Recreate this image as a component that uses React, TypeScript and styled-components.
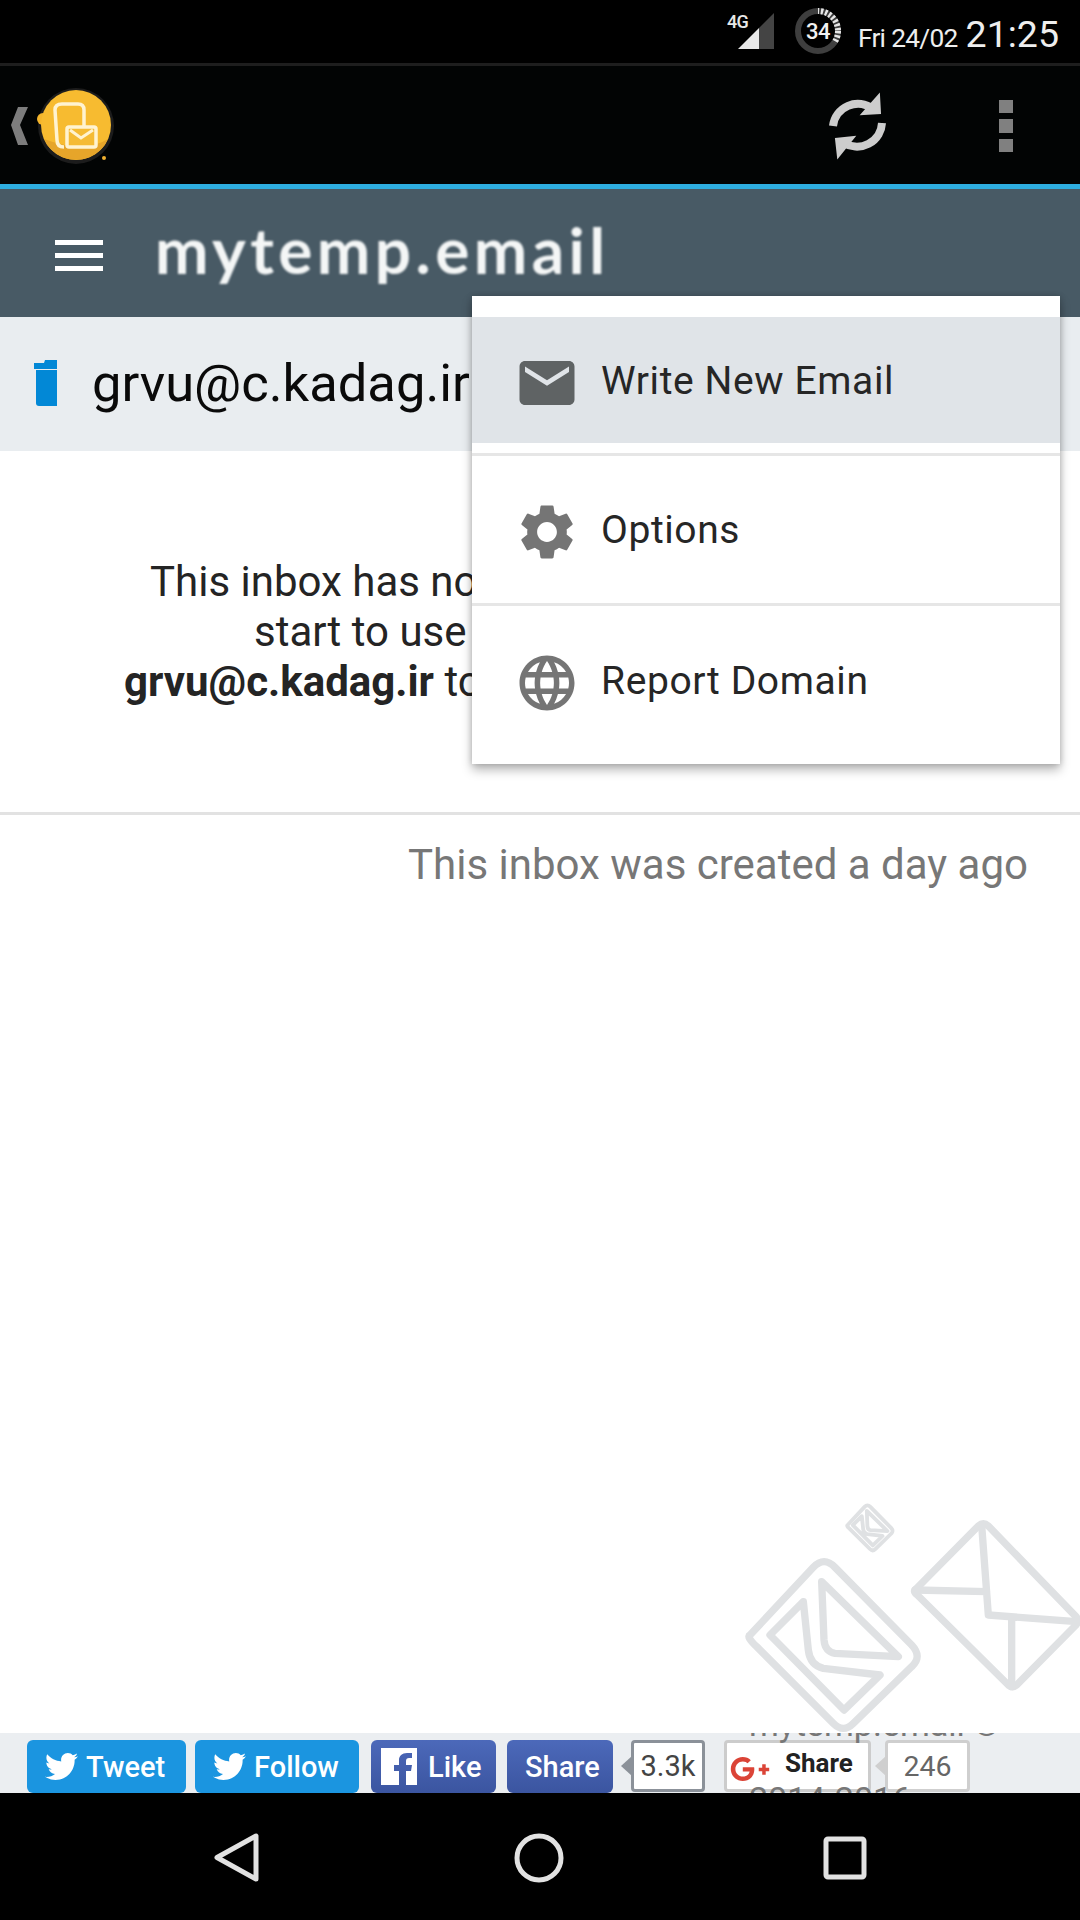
import React from "react";
import styled, { createGlobalStyle } from "styled-components";
import { MdEmail, MdSettings, MdLanguage } from "react-icons/md";
import { FaTwitter, FaGooglePlusG } from "react-icons/fa";

const Global = createGlobalStyle`
  html, body { margin: 0; padding: 0; background: #fff; }
  * { box-sizing: border-box; }
`;

const Screen = styled.div`
  position: relative;
  width: 1080px;
  height: 1920px;
  overflow: hidden;
  display: flex;
  flex-direction: column;
  background: #fff;
  font-family: Roboto, "Liberation Sans", sans-serif;
`;

const StatusBar = styled.div`
  height: 66px;
  flex: none;
  background: #000;
  border-bottom: 3px solid #1e1e1e;
  display: flex;
  align-items: flex-start;
  justify-content: flex-end;
  padding-right: 21px;
  color: #eee;
`;
const NetLabel = styled.span`
  font-size: 18px;
  font-weight: 500;
  letter-spacing: -0.6px;
  line-height: 18px;
  margin-top: 13px;
  margin-right: 3px;
  color: #e8e8e8;
  width: 22px;
`;
const Signal = styled.svg`
  width: 37px;
  height: 38px;
  margin: 12px 20px 0 -14px;
`;
const Battery = styled.div`
  position: relative;
  width: 46px;
  height: 46px;
  margin: 8px 17px 0 0;
  display: flex;
  align-items: center;
  justify-content: center;
  font-size: 22px;
  font-weight: 500;
  letter-spacing: -0.5px;
  color: #f2f2f2;
`;
const BatteryRing = styled.svg`
  position: absolute;
  inset: 0;
`;
const DateText = styled.span`
  font-size: 26.3px;
  letter-spacing: -0.7px;
  line-height: 30px;
  margin-top: 23px;
  margin-right: 8px;
`;
const Clock = styled.span`
  font-size: 37.5px;
  line-height: 42px;
  margin-top: 13px;
`;

const Toolbar = styled.div`
  height: 123px;
  flex: none;
  background: #020404;
  border-bottom: 5px solid #2eaee0;
  display: flex;
  align-items: center;
  padding-left: 11px;
`;
const BackChevron = styled.svg`
  width: 18px;
  height: 38px;
  margin-top: 2px;
`;
const AppLogo = styled.svg`
  width: 84px;
  height: 84px;
  margin-left: 5px;
  margin-top: 1px;
`;
const RefreshIcon = styled.svg`
  width: 62px;
  height: 68px;
  margin-left: auto;
  margin-right: 111px;
  margin-top: 2px;
`;
const DotMenu = styled.div`
  display: flex;
  flex-direction: column;
  gap: 6px;
  margin-right: 67px;
  margin-top: 2px;
`;
const Dot = styled.span`
  width: 14px;
  height: 13.5px;
  background: #808080;
`;

const Header = styled.div`
  height: 128px;
  flex: none;
  background: #485a65;
  display: flex;
  align-items: center;
  padding-left: 55px;
`;
const Burger = styled.div`
  display: flex;
  flex-direction: column;
  gap: 8px;
  margin-top: 5px;
`;
const BurgerBar = styled.span`
  width: 48px;
  height: 5px;
  background: #fff;
`;
const Brand = styled.div`
  margin-left: 52px;
  margin-top: -7px;
  font-family: Lato, sans-serif;
  font-size: 64px;
  font-weight: 700;
  line-height: 64px;
  letter-spacing: 4.4px;
  color: #f4f6f6;
  filter: blur(0.8px);
`;

const AddressBar = styled.div`
  height: 134px;
  flex: none;
  background: #e9edf0;
  display: flex;
  align-items: center;
  padding-left: 34px;
`;
const Bin = styled.svg`
  width: 24px;
  height: 48px;
  margin-top: -2px;
`;
const Address = styled.div`
  margin-left: 34px;
  font-size: 52.5px;
  line-height: 60px;
  margin-top: -2px;
  color: #0a0a0a;
  white-space: nowrap;
`;

const Notice = styled.div`
  flex: none;
  height: 364px;
  padding-top: 106px;
  border-bottom: 3px solid #e2e2e2;
`;
const NoticeLine = styled.div<{ $indent: number }>`
  margin-left: ${(p) => p.$indent}px;
  font-size: 42px;
  line-height: 50px;
  color: #242424;
  white-space: nowrap;
  b { font-weight: 700; }
`;
const Created = styled.div`
  flex: none;
  padding: 24px 52px 0 0;
  text-align: right;
  font-size: 42px;
  line-height: 52px;
  color: #777;
`;
const Spacer = styled.div`
  flex: 1;
`;

const Watermark = styled.svg`
  position: absolute;
  left: 720px;
  top: 1480px;
  width: 360px;
  height: 260px;
  fill: none;
  stroke: #dfe1e3;
  stroke-linejoin: round;
  stroke-linecap: round;
`;

const ShareBar = styled.div`
  position: relative;
  height: 60px;
  flex: none;
  overflow: hidden;
  background: #ebeef1;
  display: flex;
  align-items: flex-start;
  padding: 7px 0 0 27px;
`;
const GhostFooter = styled.div`
  position: absolute;
  z-index: 1;
  left: 749px;
  top: -37px;
  font-size: 34px;
  line-height: 56px;
  color: #777;
  white-space: nowrap;
`;
const GhostYears = styled.div`
  margin-top: 19px;
`;
const SocialButton = styled.div<{ $w: number; $gap: number; $fb?: boolean }>`
  position: relative;
  flex: none;
  width: ${(p) => p.$w}px;
  height: 53px;
  margin-right: ${(p) => p.$gap}px;
  border-radius: 6px;
  background: ${(p) => (p.$fb ? "linear-gradient(#4c69ba, #3b55a0)" : "#1b95e0")};
  color: #fff;
  font-size: 29px;
  font-weight: 500;
  display: flex;
  align-items: center;
  padding-left: 18px;
  gap: 8px;
  line-height: 40px;
`;
const FbMark = styled.svg`
  width: 36px;
  height: 37px;
  margin-left: -8px;
  margin-right: 3px;
`;
const Count = styled.div<{ $w: number; $gap: number; $edge: string; $color: string; $size: number }>`
  position: relative;
  flex: none;
  width: ${(p) => p.$w}px;
  height: 52px;
  margin-right: ${(p) => p.$gap}px;
  border: 3px solid ${(p) => p.$edge};
  border-radius: 4px;
  background: #fff;
  color: ${(p) => p.$color};
  font-size: ${(p) => p.$size}px;
  display: flex;
  align-items: center;
  justify-content: center;
  &::before {
    content: "";
    position: absolute;
    left: -13px;
    top: 13px;
    border-style: solid;
    border-width: 10px 11px 10px 0;
    border-color: transparent ${(p) => p.$edge} transparent transparent;
  }
`;
const PlusButton = styled.div`
  position: relative;
  flex: none;
  width: 147px;
  height: 52px;
  margin-right: 14px;
  border: 3px solid #ccc;
  border-radius: 4px;
  background: #fff;
  color: #222;
  font-size: 26px;
  font-weight: 700;
  display: flex;
  align-items: flex-start;
  padding: 5px 0 0 3px;
  line-height: 30px;
  svg { color: #db4437; margin: 1px 15px 0 0; flex: none; }
`;

const NavBar = styled.div`
  flex: none;
  height: 127px;
  background: #000;
  display: flex;
  align-items: flex-start;
  padding-top: 40px;
  padding-left: 213px;
`;
const NavIcon = styled.svg`
  fill: none;
  stroke: #e2e2e2;
  stroke-linejoin: round;
  flex: none;
`;
const HomeIcon = styled(NavIcon)`
  margin-left: 253px;
`;
const RecentIcon = styled(NavIcon)`
  margin-left: 259px;
  margin-top: 3px;
`;

const Menu = styled.div`
  position: absolute;
  left: 472px;
  top: 296px;
  width: 588px;
  height: 468px;
  padding-top: 21px;
  background: #fff;
  box-shadow: 0 6px 10px rgba(0, 0, 0, 0.28), 0 0 6px rgba(0, 0, 0, 0.18);
`;
const MenuSlot = styled.div<{ $h: number; $pad?: number; $rule?: boolean }>`
  height: ${(p) => p.$h}px;
  padding-bottom: ${(p) => p.$pad ?? 0}px;
  border-bottom: ${(p) => (p.$rule ? "3px solid #e6e6e6" : "none")};
`;
const MenuItem = styled.div<{ $active?: boolean; $shift?: number }>`
  height: 100%;
  display: flex;
  align-items: center;
  padding-left: 42px;
  padding-top: 5px;
  padding-bottom: ${(p) => p.$shift ?? 0}px;
  background: ${(p) => (p.$active ? "#e0e4e8" : "transparent")};
  color: ${(p) => (p.$active ? "#5f6364" : "#757575")};
`;
const MenuLabel = styled.span`
  margin-left: 21px;
  font-size: 39px;
  letter-spacing: 0.6px;
  line-height: 44px;
  color: #262626;
  margin-top: -4px;
`;

const EnvelopeGlyph = () => (
  <>
    <path d="M90 465 L280 262 Q312 228 345 262 L575 495 Q608 530 575 560 L400 730 Q370 760 340 730 L110 500 Q78 470 90 465Z" />
    <path d="M250 365 L150 465 L372 690 L480 585 L310 565 Q270 555 265 510 Z" />
    <path d="M305 305 L535 530 L345 520 Q315 515 312 480 Z" />
  </>
);

export default function App() {
  return (
    <Screen>
      <Global />
      <StatusBar>
        <NetLabel>4G</NetLabel>
        <Signal viewBox="0 0 37 38">
          <path d="M0 37 L21 16 V37Z" fill="#e8e8e8" />
          <path d="M21 16 L36 1 V37 H21Z" fill="#444" />
        </Signal>
        <Battery>
          <BatteryRing viewBox="0 0 46 46">
            <circle cx="23" cy="23" r="20" fill="none" stroke="#3e3e3e" strokeWidth="6" />
            <circle
              cx="23"
              cy="23"
              r="20"
              fill="none"
              stroke="#e6e6e6"
              strokeWidth="6"
              strokeDasharray="2.4 1.8"
              style={{ clipPath: "polygon(50% 50%, 50% 0, 100% 0, 100% 85%)" }}
            />
          </BatteryRing>
          34
        </Battery>
        <DateText>Fri 24/02</DateText>
        <Clock>21:25</Clock>
      </StatusBar>

      <Toolbar>
        <BackChevron viewBox="0 0 18 38">
          <path d="M17 0 L7 0 L0 18 L7 38 L17 38 L9 18Z" fill="#7d7d7d" />
        </BackChevron>
        <AppLogo viewBox="0 0 84 84">
          <circle cx="42" cy="42" r="38" fill="#1c1c1c" />
          <circle cx="9" cy="35" r="6" fill="#f4b52c" />
          <circle cx="70" cy="74" r="2" fill="#f0b030" />
          <circle cx="42" cy="41" r="35" fill="#f7bb30" />
          <path d="M10 55 A35 35 0 0 0 74 55 Q50 70 10 55Z" fill="#e6a52a" />
          <path d="M30 63 Q23 63 23 56 L21 26 Q21 20 28 20 H44 Q50 20 50 26 V42" fill="none" stroke="#fff3d0" strokeWidth="3.5" />
          <rect x="33" y="43" width="29" height="20" rx="2" fill="#f5bb34" stroke="#fff3d0" strokeWidth="3.5" />
          <path d="M36 46 L47 54 L59 46" fill="none" stroke="#fff3d0" strokeWidth="3" />
        </AppLogo>
        <RefreshIcon viewBox="0 0 62 68">
          <path d="M7 34 A25 25 0 0 1 47 17" fill="none" stroke="#cdcdcd" strokeWidth="8" />
          <path d="M53 3 L54 21 L36 22Z" fill="#cdcdcd" stroke="#cdcdcd" strokeWidth="2" />
          <path d="M56 31 A25 25 0 0 1 18 51" fill="none" stroke="#cdcdcd" strokeWidth="8" />
          <path d="M12 65 L10 47 L28 45Z" fill="#cdcdcd" stroke="#cdcdcd" strokeWidth="2" />
        </RefreshIcon>
        <DotMenu>
          <Dot />
          <Dot />
          <Dot />
        </DotMenu>
      </Toolbar>

      <Header>
        <Burger>
          <BurgerBar />
          <BurgerBar />
          <BurgerBar />
        </Burger>
        <Brand>mytemp.email</Brand>
      </Header>

      <AddressBar>
        <Bin viewBox="0 0 24 48">
          <path d="M0 4 L10 4 L11 1 H23 V10 H0Z" fill="#0288d6" />
          <path d="M2 11 H23 V47 H5 Q2 47 2 44Z" fill="#0288d6" />
        </Bin>
        <Address>grvu@c.kadag.ir</Address>
      </AddressBar>

      <Notice>
        <NoticeLine $indent={150}>This inbox has no</NoticeLine>
        <NoticeLine $indent={254}>start to use</NoticeLine>
        <NoticeLine $indent={124}>
          <b>grvu@c.kadag.ir</b> to
        </NoticeLine>
      </Notice>
      <Created>This inbox was created a day ago</Created>
      <Spacer />

      <ShareBar>
        <GhostFooter>
          mytemp.email ©
          <GhostYears>2014-2016</GhostYears>
        </GhostFooter>
        <SocialButton $w={159} $gap={9}>
          <FaTwitter size={33} />
          Tweet
        </SocialButton>
        <SocialButton $w={164} $gap={12}>
          <FaTwitter size={33} />
          Follow
        </SocialButton>
        <SocialButton $w={125} $gap={11} $fb>
          <FbMark viewBox="0 0 36 37">
            <path d="M0 0h36v37H25V23h5l1-6h-6v-4c0-2 1-3 3-3h3V5h-5c-5 0-8 3-8 7v5h-5v6h5v14H0z" fill="#fff" />
          </FbMark>
          Like
        </SocialButton>
        <SocialButton $w={106} $gap={18} $fb>
          Share
        </SocialButton>
        <Count $w={74} $gap={19} $edge="#8b9199" $color="#444" $size={29}>
          3.3k
        </Count>
        <PlusButton>
          <FaGooglePlusG size={40} />
          Share
        </PlusButton>
        <Count $w={85} $gap={0} $edge="#cfcfcf" $color="#666" $size={28.5}>
          246
        </Count>
      </ShareBar>

      <NavBar>
        <NavIcon width="48" height="50" viewBox="0 0 48 50" strokeWidth="5">
          <path d="M43 3 V46 L4 24.5Z" />
        </NavIcon>
        <HomeIcon width="50" height="50" viewBox="0 0 50 50" strokeWidth="5">
          <circle cx="25" cy="25" r="22" />
        </HomeIcon>
        <RecentIcon width="44" height="44" viewBox="0 0 44 44" strokeWidth="5">
          <rect x="3" y="3" width="38" height="38" rx="2" />
        </RecentIcon>
      </NavBar>

      <Watermark viewBox="0 0 1080 780">
        <g strokeWidth="22">
          <EnvelopeGlyph />
          <path d="M585 330 L775 138 Q790 125 805 138 L1068 410 Q1078 422 1068 435 L890 615 Q878 625 865 615 L592 345 Q580 335 585 330Z" />
          <path d="M585 330 L800 335 M785 135 L805 405 L1070 425 M875 415 L875 620" />
        </g>
        <g strokeWidth="42" transform="translate(358 10) scale(0.27)">
          <EnvelopeGlyph />
        </g>
      </Watermark>

      <Menu>
        <MenuSlot $h={139} $pad={10} $rule>
          <MenuItem $active>
            <MdEmail size={66} />
            <MenuLabel>Write New Email</MenuLabel>
          </MenuItem>
        </MenuSlot>
        <MenuSlot $h={150} $rule>
          <MenuItem>
            <MdSettings size={66} />
            <MenuLabel>Options</MenuLabel>
          </MenuItem>
        </MenuSlot>
        <MenuSlot $h={158}>
          <MenuItem $shift={10}>
            <MdLanguage size={66} />
            <MenuLabel>Report Domain</MenuLabel>
          </MenuItem>
        </MenuSlot>
      </Menu>
    </Screen>
  );
}
